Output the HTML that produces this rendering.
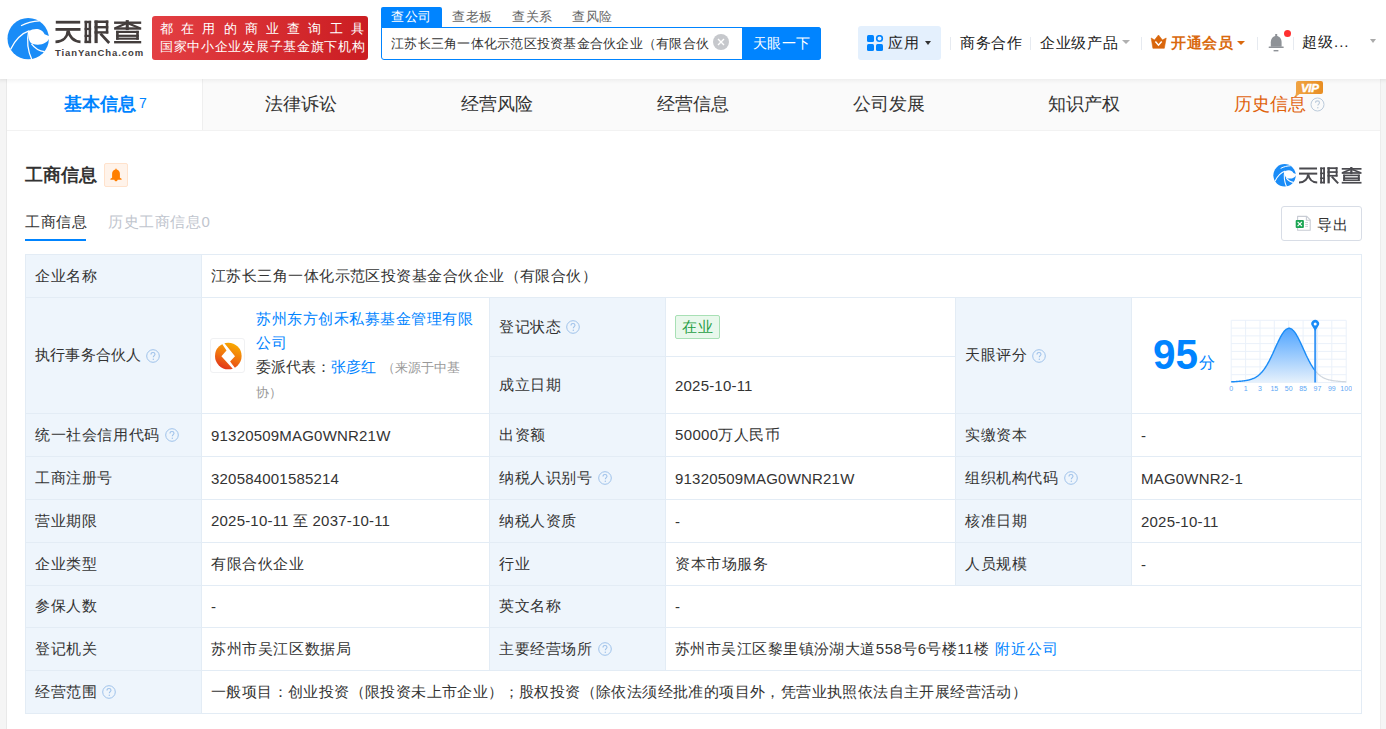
<!DOCTYPE html>
<html><head><meta charset="utf-8">
<style>
*{box-sizing:border-box;margin:0;padding:0}
html,body{width:1386px;height:729px;overflow:hidden;background:#f5f5f5;font-family:"Liberation Sans",sans-serif;color:#333}
.abs{position:absolute;white-space:nowrap}
#hdr{position:absolute;left:0;top:0;width:1386px;height:79px;background:#fff;box-shadow:0 1px 3px rgba(0,0,0,.04)}
#card{position:absolute;left:6px;top:79px;width:1375px;height:660px;background:#fff;border-left:1px solid #e9e9e9;border-right:1px solid #ececec}
#shd{position:absolute;left:0;top:79px;width:1386px;height:5px;background:linear-gradient(rgba(0,0,0,.045),rgba(0,0,0,0))}
#tabs{position:absolute;left:0;top:0;width:1373px;height:52px;background:#fafafa;border-bottom:1px solid #f2f2f2}
.tab{position:absolute;top:0;height:52px;line-height:50px;font-size:18px;color:#333;text-align:center}
.tb{position:absolute;left:18px;top:175px;width:1337px;border-collapse:collapse}
.c{position:absolute;display:flex;align-items:center;white-space:nowrap;font-size:15px;color:#333;letter-spacing:0.6px}
.n{letter-spacing:0.2px}
.q{margin-left:5px;flex:none}
.tag{display:inline-block;height:24px;line-height:22px;padding:0 6px;border:1px solid #a8e0b5;background:#e9f8ec;color:#1f9e44;border-radius:2px;font-size:15px}
.lnk{color:#0084ff}
</style></head><body>
<div id="hdr">
  <!-- logo -->
  <svg class="abs" style="left:5px;top:14px" width="48" height="48" viewBox="0 0 48 48">
<circle cx="23.2" cy="24.6" r="20.7" fill="#1a8cf7"/>
<path d="M23.8 17.2C29 14.2 36.5 13.8 39.6 20.3L45 22.5C43.5 29.5 35 32 28 30C24.5 28.8 22.8 25 23.8 17.2Z" fill="#fff"/>
<path d="M5.5 35.5C10 26 16 19.5 24.5 16.6" stroke="#fff" stroke-width="1.3" fill="none"/>
<path d="M23.6 17.5C21.8 26 22.5 36 26.8 45.5" stroke="#fff" stroke-width="1.3" fill="none"/>
<path d="M16 11.8C22 8.5 28 7.2 34.5 6.9" stroke="#fff" stroke-width="1.2" fill="none"/>
<path d="M26.5 29.8C30 34.5 34 37 39.5 37.6" stroke="#fff" stroke-width="1.3" fill="none"/>
  </svg>
  <svg class="abs" style="left:50px;top:15px;color:#433d3c" width="95" height="32" viewBox="0 0 95 32"><g fill="currentColor">
<rect x="5.8" y="5.8" width="24.4" height="2.8"/><rect x="5.5" y="13" width="25" height="2.8"/>
<rect x="34.6" y="5.8" width="6.5" height="2.4"/><rect x="34.6" y="25.7" width="6.5" height="2.4"/><rect x="34.6" y="5.8" width="2.5" height="22.3"/><rect x="38.6" y="5.8" width="2.5" height="22.3"/><rect x="34.6" y="12.9" width="6.5" height="2.2"/><rect x="34.6" y="19.8" width="6.5" height="2.2"/>
<rect x="44.5" y="5.5" width="3.2" height="22.6"/><rect x="44.5" y="5.5" width="13.8" height="2.5"/><rect x="55.8" y="5.5" width="2.5" height="13"/><rect x="44.5" y="11" width="13.8" height="2.4"/><rect x="44.5" y="16.2" width="13.8" height="2.4"/>
<rect x="64.1" y="6.5" width="27.1" height="2.4"/><rect x="75.7" y="5.1" width="3.1" height="10"/><rect x="64.1" y="12.3" width="27.1" height="2.4"/><rect x="66.1" y="15.8" width="2.6" height="8.9"/><rect x="86.2" y="15.8" width="2.6" height="8.9"/><rect x="66.1" y="15.8" width="22.7" height="2.2"/><rect x="66.1" y="19.7" width="22.7" height="2.2"/><rect x="66.1" y="22.6" width="22.7" height="2.1"/><rect x="64.1" y="26" width="27.1" height="2.4"/>
</g>
<g stroke="currentColor" fill="none" stroke-width="2.8"><path d="M18 15.5C17.6 21.5 13.5 26.6 5.5 26.9"/><path d="M18.2 15.5C19 21.5 23.5 26.6 30.5 26.9"/><path d="M50.5 18.6L59.2 28"/></g>
<g stroke="currentColor" fill="none" stroke-width="2.2"><path d="M76 8.5L65 13.2M78.5 8.5L90 13.2"/></g></svg>
  <div class="abs" style="left:55px;top:47px;font-size:9.5px;font-weight:bold;color:#433d3c;letter-spacing:0.9px">TianYanCha.com</div>
  <div class="abs" style="left:152px;top:16px;width:216px;height:44px;border-radius:3px;background:linear-gradient(90deg,#e33f43,#cb1d22)"></div>
  <div class="abs" style="left:160px;top:20px;font-size:13px;color:#fff;letter-spacing:8.2px">都在用的商业查询工具</div>
  <div class="abs" style="left:160px;top:38px;font-size:13px;color:#fff;letter-spacing:0.7px">国家中小企业发展子基金旗下机构</div>
  <!-- search -->
  <div class="abs" style="left:381px;top:7px;width:61px;height:21px;background:#0084ff;border-radius:2px 2px 0 0"></div>
  <div class="abs" style="left:391px;top:8px;font-size:13px;letter-spacing:0.6px;color:#fff">查公司</div>
  <div class="abs" style="left:452px;top:8px;font-size:13px;letter-spacing:0.6px;color:#666">查老板</div>
  <div class="abs" style="left:512px;top:8px;font-size:13px;letter-spacing:0.6px;color:#666">查关系</div>
  <div class="abs" style="left:572px;top:8px;font-size:13px;letter-spacing:0.6px;color:#666">查风险</div>
  <div class="abs" style="left:381px;top:27px;width:440px;height:33px;border:1px solid #0084ff;border-radius:0 3px 3px 3px;background:#fff"></div>
  <div class="abs" style="left:391px;top:35px;font-size:13px;letter-spacing:0.25px;color:#333">江苏长三角一体化示范区投资基金合伙企业（有限合伙</div>
  <svg class="abs" style="left:713px;top:34px" width="16" height="16" viewBox="0 0 16 16"><circle cx="8" cy="8" r="8" fill="#c6c8cc"/><path d="M5 5L11 11M11 5L5 11" stroke="#fff" stroke-width="1.4"/></svg>
  <div class="abs" style="left:742px;top:27px;width:79px;height:33px;background:#0084ff;border-radius:0 3px 3px 0;color:#fff;font-size:14px;letter-spacing:0.6px;text-indent:0.6px;line-height:33px;text-align:center">天眼一下</div>
  <!-- right nav -->
  <div class="abs" style="left:858px;top:26px;width:83px;height:34px;background:#e4f0fd;border-radius:3px"></div>
  <svg class="abs" style="left:867px;top:35px" width="17" height="16" viewBox="0 0 17 16">
    <rect x="0" y="0" width="7" height="7" rx="1.5" fill="#0084ff"/>
    <circle cx="12.5" cy="3.5" r="2.8" fill="none" stroke="#0084ff" stroke-width="1.6"/>
    <rect x="0" y="9" width="7" height="7" rx="1.5" fill="#0084ff"/>
    <rect x="9" y="9" width="7" height="7" rx="1.5" fill="#0084ff"/>
  </svg>
  <div class="abs" style="left:888px;top:34px;font-size:15px;letter-spacing:1px;color:#222">应用</div>
  <div class="abs" style="left:925px;top:41px;width:0;height:0;border-left:3.5px solid transparent;border-right:3.5px solid transparent;border-top:4px solid #333"></div>
  <div class="abs" style="left:950px;top:37px;width:1px;height:13px;background:#e6eaf0"></div>
  <div class="abs" style="left:960px;top:34px;font-size:15px;letter-spacing:0.7px;color:#222">商务合作</div>
  <div class="abs" style="left:1030px;top:37px;width:1px;height:13px;background:#e6eaf0"></div>
  <div class="abs" style="left:1040px;top:34px;font-size:15px;letter-spacing:0.7px;color:#222">企业级产品</div>
  <div class="abs" style="left:1122px;top:40px;width:0;height:0;border-left:4px solid transparent;border-right:4px solid transparent;border-top:4px solid #b0b0b0"></div>
  <div class="abs" style="left:1141px;top:37px;width:1px;height:13px;background:#e6eaf0"></div>
  <svg class="abs" style="left:1150px;top:34px" width="18" height="16" viewBox="0 0 18 16"><path d="M1.2 4L4.5 6L8.5 1L12.4 6L16.2 4L14.3 14.3H2.9Z" fill="#d9660c" stroke="#d9660c" stroke-width="0.6" stroke-linejoin="round"/><path d="M5.4 7.6L8.5 11.2L11.7 7.6" stroke="#fff" stroke-width="1.5" fill="none"/></svg>
  <div class="abs" style="left:1171px;top:34px;font-size:15px;letter-spacing:0.5px;font-weight:bold;color:#d9690e">开通会员</div>
  <div class="abs" style="left:1237px;top:41px;width:0;height:0;border-left:4px solid transparent;border-right:4px solid transparent;border-top:4px solid #d9690e"></div>
  <div class="abs" style="left:1257px;top:37px;width:1px;height:13px;background:#e6eaf0"></div>
  <svg class="abs" style="left:1268px;top:34px" width="17" height="18" viewBox="0 0 17 18"><rect x="7.2" y="0" width="2" height="2.6" fill="#8e9297"/><path d="M2.8 12.8V8.2C2.8 4.6 5 2 8.2 2S13.6 4.6 13.6 8.2V12.8Z" fill="#8e9297"/><rect x="0.6" y="12.4" width="15.2" height="1.5" rx="0.7" fill="#8e9297"/><rect x="5.6" y="16" width="4.8" height="1.4" fill="#8e9297"/></svg>
  <div class="abs" style="left:1284px;top:30px;width:7px;height:7px;border-radius:50%;background:#ff3030"></div>
  <div class="abs" style="left:1293px;top:37px;width:1px;height:13px;background:#e6eaf0"></div>
  <div class="abs" style="left:1302px;top:33px;font-size:15px;letter-spacing:1px;color:#222">超级...</div>
  <div class="abs" style="left:1370px;top:39px;width:0;height:0;border-left:3.5px solid transparent;border-right:3.5px solid transparent;border-top:4px solid #aaa"></div>
</div>

<div id="card">
  <div id="tabs">
    <div class="abs" style="left:0;top:0;width:196px;height:51px;background:#fff;border-right:1px solid #efefef"></div>
    <div class="tab" style="left:57px;top:-1px;font-weight:bold;color:#0084ff">基本信息<span style="font-size:14px;font-weight:normal;margin-left:3px;vertical-align:2px">7</span></div>
    <div class="tab" style="left:258px">法律诉讼</div>
    <div class="tab" style="left:454px">经营风险</div>
    <div class="tab" style="left:650px">经营信息</div>
    <div class="tab" style="left:846px">公司发展</div>
    <div class="tab" style="left:1041px">知识产权</div>
    <div class="tab" style="left:1227px;color:#e0620c">历史信息</div>
  </div>
</div>

<div id="shd"></div>
<!-- section -->
<div class="abs" style="left:25px;top:163px;font-size:18px;font-weight:bold;color:#333">工商信息</div>
<div class="abs" style="left:104px;top:163px;width:24px;height:24px;background:#fff3ea;border:1px solid #ffe2cc;border-radius:2px"></div>
<svg class="abs" style="left:110px;top:168px" width="12" height="14" viewBox="0 0 12 14"><path d="M6 0.6C5.5 0.6 5.4 1 5.4 1.5C3.4 2 2.1 3.6 2.1 5.8V9.8L0.4 10.8V11.8H4.3C4.4 12.7 5.1 13.3 6 13.3S7.6 12.7 7.7 11.8H11.6V10.8L9.9 9.8V5.8C9.9 3.6 8.6 2 6.6 1.5C6.6 1 6.5 0.6 6 0.6Z" fill="#ff7f00"/></svg>
<svg class="abs" style="left:1272px;top:162px" width="26" height="26" viewBox="0 0 48 48">
<circle cx="23.2" cy="24.6" r="20.7" fill="#1a8cf7"/>
<path d="M23.8 17.2C29 14.2 36.5 13.8 39.6 20.3L45 22.5C43.5 29.5 35 32 28 30C24.5 28.8 22.8 25 23.8 17.2Z" fill="#fff"/>
<path d="M5.5 35.5C10 26 16 19.5 24.5 16.6" stroke="#fff" stroke-width="2" fill="none"/>
<path d="M23.6 17.5C21.8 26 22.5 36 26.8 45.5" stroke="#fff" stroke-width="2" fill="none"/>
<path d="M16 11.8C22 8.5 28 7.2 34.5 6.9" stroke="#fff" stroke-width="1.8" fill="none"/>
<path d="M26.5 29.8C30 34.5 34 37 39.5 37.6" stroke="#fff" stroke-width="2" fill="none"/>
</svg>
<svg class="abs" style="left:1299px;top:167px;color:#4a4a4f" width="62.5" height="16.6" viewBox="5.5 5.1 85.7 23.3" preserveAspectRatio="none"><g fill="currentColor">
<rect x="5.8" y="5.8" width="24.4" height="2.8"/><rect x="5.5" y="13" width="25" height="2.8"/>
<rect x="34.6" y="5.8" width="6.5" height="2.4"/><rect x="34.6" y="25.7" width="6.5" height="2.4"/><rect x="34.6" y="5.8" width="2.5" height="22.3"/><rect x="38.6" y="5.8" width="2.5" height="22.3"/><rect x="34.6" y="12.9" width="6.5" height="2.2"/><rect x="34.6" y="19.8" width="6.5" height="2.2"/>
<rect x="44.5" y="5.5" width="3.2" height="22.6"/><rect x="44.5" y="5.5" width="13.8" height="2.5"/><rect x="55.8" y="5.5" width="2.5" height="13"/><rect x="44.5" y="11" width="13.8" height="2.4"/><rect x="44.5" y="16.2" width="13.8" height="2.4"/>
<rect x="64.1" y="6.5" width="27.1" height="2.4"/><rect x="75.7" y="5.1" width="3.1" height="10"/><rect x="64.1" y="12.3" width="27.1" height="2.4"/><rect x="66.1" y="15.8" width="2.6" height="8.9"/><rect x="86.2" y="15.8" width="2.6" height="8.9"/><rect x="66.1" y="15.8" width="22.7" height="2.2"/><rect x="66.1" y="19.7" width="22.7" height="2.2"/><rect x="66.1" y="22.6" width="22.7" height="2.1"/><rect x="64.1" y="26" width="27.1" height="2.4"/>
</g>
<g stroke="currentColor" fill="none" stroke-width="2.8"><path d="M18 15.5C17.6 21.5 13.5 26.6 5.5 26.9"/><path d="M18.2 15.5C19 21.5 23.5 26.6 30.5 26.9"/><path d="M50.5 18.6L59.2 28"/></g>
<g stroke="currentColor" fill="none" stroke-width="2.2"><path d="M76 8.5L65 13.2M78.5 8.5L90 13.2"/></g></svg>
<div class="abs" style="left:25px;top:213px;font-size:15px;letter-spacing:0.5px;color:#333">工商信息</div>
<div class="abs" style="left:108px;top:213px;font-size:15px;letter-spacing:0.6px;color:#bfc5ce">历史工商信息0</div>
<div class="abs" style="left:25px;top:239px;width:61px;height:2px;background:#0084ff"></div>
<div class="abs" style="left:1281px;top:206px;width:81px;height:35px;border:1px solid #d8dde6;border-radius:3px;background:#fff"></div>
<svg class="abs" style="left:1295px;top:215px" width="17" height="17" viewBox="0 0 17 17"><path d="M2.6 1.4H11.8L15.2 4.8V15.2H2.6Z" fill="#fff" stroke="#c8ccd4" stroke-width="1.1" stroke-linejoin="round"/><path d="M11.4 1.4V5.2H15.2" fill="none" stroke="#c8ccd4" stroke-width="1.1"/><rect x="0.7" y="5" width="8.2" height="8" rx="1" fill="#1ba553"/><path d="M2.6 6.9L6.9 11.1M6.9 6.9L2.6 11.1" stroke="#fff" stroke-width="1.2"/><path d="M10.2 7.5H13M10.2 9.5H13M10.2 11.4H13" stroke="#c8ccd4" stroke-width="0.9"/></svg>
<div class="abs" style="left:1317px;top:216px;font-size:15px;letter-spacing:0.5px;color:#333">导出</div>
<div class="abs" style="left:25px;top:254px;width:1337px;height:460px;background:#fff"></div>
<div class="abs" style="left:25px;top:254px;width:176px;height:459px;background:#eef5fc"></div>
<div class="abs" style="left:489px;top:297px;width:176px;height:288px;background:#eef5fc"></div>
<div class="abs" style="left:955px;top:297px;width:176px;height:288px;background:#eef5fc"></div>
<div class="abs" style="left:489px;top:585px;width:176px;height:85px;background:#eef5fc"></div>
<div class="abs" style="left:25px;top:254px;width:1337px;height:1px;background:#e3ecf5"></div>
<div class="abs" style="left:25px;top:297px;width:1337px;height:1px;background:#e3ecf5"></div>
<div class="abs" style="left:25px;top:413px;width:1337px;height:1px;background:#e3ecf5"></div>
<div class="abs" style="left:25px;top:456px;width:1337px;height:1px;background:#e3ecf5"></div>
<div class="abs" style="left:25px;top:499px;width:1337px;height:1px;background:#e3ecf5"></div>
<div class="abs" style="left:25px;top:542px;width:1337px;height:1px;background:#e3ecf5"></div>
<div class="abs" style="left:25px;top:585px;width:1337px;height:1px;background:#e3ecf5"></div>
<div class="abs" style="left:25px;top:627px;width:1337px;height:1px;background:#e3ecf5"></div>
<div class="abs" style="left:25px;top:670px;width:1337px;height:1px;background:#e3ecf5"></div>
<div class="abs" style="left:25px;top:713px;width:1337px;height:1px;background:#e3ecf5"></div>
<div class="abs" style="left:489px;top:356px;width:467px;height:1px;background:#e3ecf5"></div>
<div class="abs" style="left:25px;top:254px;width:1px;height:460px;background:#e3ecf5"></div>
<div class="abs" style="left:1361px;top:254px;width:1px;height:460px;background:#e3ecf5"></div>
<div class="abs" style="left:201px;top:254px;width:1px;height:460px;background:#e3ecf5"></div>
<div class="abs" style="left:489px;top:297px;width:1px;height:374px;background:#e3ecf5"></div>
<div class="abs" style="left:665px;top:297px;width:1px;height:374px;background:#e3ecf5"></div>
<div class="abs" style="left:955px;top:297px;width:1px;height:289px;background:#e3ecf5"></div>
<div class="abs" style="left:1131px;top:297px;width:1px;height:289px;background:#e3ecf5"></div>
<div class="c" style="left:35px;top:255px;height:42px">企业名称</div>
<div class="c" style="left:211px;top:255px;height:42px;letter-spacing:0.45px">江苏长三角一体化示范区投资基金合伙企业（有限合伙）</div>
<div class="c" style="left:35px;top:298px;height:115px;letter-spacing:0.2px">执行事务合伙人<svg class="q" width="14" height="14" viewBox="0 0 14 14"><circle cx="7" cy="7" r="6.3" fill="none" stroke="#9fc2ea" stroke-width="1"/><path d="M5 5.4C5 4.2 5.9 3.5 7 3.5S9 4.2 9 5.3C9 6.5 7.3 6.8 7.3 8.2" fill="none" stroke="#9fc2ea" stroke-width="1.1"/><circle cx="7.3" cy="10.2" r="0.7" fill="#9fc2ea"/></svg></div>
<div class="c" style="left:499px;top:298px;height:58px">登记状态<svg class="q" width="14" height="14" viewBox="0 0 14 14"><circle cx="7" cy="7" r="6.3" fill="none" stroke="#9fc2ea" stroke-width="1"/><path d="M5 5.4C5 4.2 5.9 3.5 7 3.5S9 4.2 9 5.3C9 6.5 7.3 6.8 7.3 8.2" fill="none" stroke="#9fc2ea" stroke-width="1.1"/><circle cx="7.3" cy="10.2" r="0.7" fill="#9fc2ea"/></svg></div>
<div class="c" style="left:675px;top:298px;height:58px"><span class="tag">在业</span></div>
<div class="c" style="left:499px;top:357px;height:56px">成立日期</div>
<div class="c n" style="left:675px;top:357px;height:56px">2025-10-11</div>
<div class="c" style="left:965px;top:298px;height:115px">天眼评分<svg class="q" width="14" height="14" viewBox="0 0 14 14"><circle cx="7" cy="7" r="6.3" fill="none" stroke="#9fc2ea" stroke-width="1"/><path d="M5 5.4C5 4.2 5.9 3.5 7 3.5S9 4.2 9 5.3C9 6.5 7.3 6.8 7.3 8.2" fill="none" stroke="#9fc2ea" stroke-width="1.1"/><circle cx="7.3" cy="10.2" r="0.7" fill="#9fc2ea"/></svg></div>
<div class="c" style="left:35px;top:414px;height:42px">统一社会信用代码<svg class="q" width="14" height="14" viewBox="0 0 14 14"><circle cx="7" cy="7" r="6.3" fill="none" stroke="#9fc2ea" stroke-width="1"/><path d="M5 5.4C5 4.2 5.9 3.5 7 3.5S9 4.2 9 5.3C9 6.5 7.3 6.8 7.3 8.2" fill="none" stroke="#9fc2ea" stroke-width="1.1"/><circle cx="7.3" cy="10.2" r="0.7" fill="#9fc2ea"/></svg></div>
<div class="c n" style="left:211px;top:414px;height:42px">91320509MAG0WNR21W</div>
<div class="c" style="left:499px;top:414px;height:42px">出资额</div>
<div class="c" style="left:675px;top:414px;height:42px;letter-spacing:0.35px">50000万人民币</div>
<div class="c" style="left:965px;top:414px;height:42px">实缴资本</div>
<div class="c n" style="left:1141px;top:414px;height:42px">-</div>
<div class="c" style="left:35px;top:457px;height:42px">工商注册号</div>
<div class="c n" style="left:211px;top:457px;height:42px">320584001585214</div>
<div class="c" style="left:499px;top:457px;height:42px">纳税人识别号<svg class="q" width="14" height="14" viewBox="0 0 14 14"><circle cx="7" cy="7" r="6.3" fill="none" stroke="#9fc2ea" stroke-width="1"/><path d="M5 5.4C5 4.2 5.9 3.5 7 3.5S9 4.2 9 5.3C9 6.5 7.3 6.8 7.3 8.2" fill="none" stroke="#9fc2ea" stroke-width="1.1"/><circle cx="7.3" cy="10.2" r="0.7" fill="#9fc2ea"/></svg></div>
<div class="c n" style="left:675px;top:457px;height:42px">91320509MAG0WNR21W</div>
<div class="c" style="left:965px;top:457px;height:42px">组织机构代码<svg class="q" width="14" height="14" viewBox="0 0 14 14"><circle cx="7" cy="7" r="6.3" fill="none" stroke="#9fc2ea" stroke-width="1"/><path d="M5 5.4C5 4.2 5.9 3.5 7 3.5S9 4.2 9 5.3C9 6.5 7.3 6.8 7.3 8.2" fill="none" stroke="#9fc2ea" stroke-width="1.1"/><circle cx="7.3" cy="10.2" r="0.7" fill="#9fc2ea"/></svg></div>
<div class="c n" style="left:1141px;top:457px;height:42px">MAG0WNR2-1</div>
<div class="c" style="left:35px;top:500px;height:42px">营业期限</div>
<div class="c n" style="left:211px;top:500px;height:42px">2025-10-11 至 2037-10-11</div>
<div class="c" style="left:499px;top:500px;height:42px">纳税人资质</div>
<div class="c n" style="left:675px;top:500px;height:42px">-</div>
<div class="c" style="left:965px;top:500px;height:42px">核准日期</div>
<div class="c n" style="left:1141px;top:500px;height:42px">2025-10-11</div>
<div class="c" style="left:35px;top:543px;height:42px">企业类型</div>
<div class="c" style="left:211px;top:543px;height:42px">有限合伙企业</div>
<div class="c" style="left:499px;top:543px;height:42px">行业</div>
<div class="c" style="left:675px;top:543px;height:42px">资本市场服务</div>
<div class="c" style="left:965px;top:543px;height:42px">人员规模</div>
<div class="c n" style="left:1141px;top:543px;height:42px">-</div>
<div class="c" style="left:35px;top:586px;height:41px">参保人数</div>
<div class="c n" style="left:211px;top:586px;height:41px">-</div>
<div class="c" style="left:499px;top:586px;height:41px">英文名称</div>
<div class="c n" style="left:675px;top:586px;height:41px">-</div>
<div class="c" style="left:35px;top:628px;height:42px">登记机关</div>
<div class="c" style="left:211px;top:628px;height:42px">苏州市吴江区数据局</div>
<div class="c" style="left:499px;top:628px;height:42px">主要经营场所<svg class="q" width="14" height="14" viewBox="0 0 14 14"><circle cx="7" cy="7" r="6.3" fill="none" stroke="#9fc2ea" stroke-width="1"/><path d="M5 5.4C5 4.2 5.9 3.5 7 3.5S9 4.2 9 5.3C9 6.5 7.3 6.8 7.3 8.2" fill="none" stroke="#9fc2ea" stroke-width="1.1"/><circle cx="7.3" cy="10.2" r="0.7" fill="#9fc2ea"/></svg></div>
<div class="c" style="left:675px;top:628px;height:42px;letter-spacing:0.45px">苏州市吴江区黎里镇汾湖大道558号6号楼11楼<span class="lnk" style="margin-left:6px;letter-spacing:0.9px">附近公司</span></div>
<div class="c" style="left:35px;top:671px;height:42px">经营范围<svg class="q" width="14" height="14" viewBox="0 0 14 14"><circle cx="7" cy="7" r="6.3" fill="none" stroke="#9fc2ea" stroke-width="1"/><path d="M5 5.4C5 4.2 5.9 3.5 7 3.5S9 4.2 9 5.3C9 6.5 7.3 6.8 7.3 8.2" fill="none" stroke="#9fc2ea" stroke-width="1.1"/><circle cx="7.3" cy="10.2" r="0.7" fill="#9fc2ea"/></svg></div>
<div class="c" style="left:211px;top:671px;height:42px;letter-spacing:0.4px">一般项目：创业投资（限投资未上市企业）；股权投资（除依法须经批准的项目外，凭营业执照依法自主开展经营活动）</div>

<!-- partner -->
<div class="abs" style="left:210px;top:338px;width:35px;height:35px;border:1px solid #f0f1f3;border-radius:3px;background:#fff"></div>
<svg class="abs" style="left:206px;top:334px" width="44" height="44" viewBox="0 0 44 44">
<defs><linearGradient id="pl" x1="0.7" y1="0" x2="0.3" y2="1"><stop offset="0" stop-color="#f8ad00"/><stop offset="0.55" stop-color="#f07010"/><stop offset="1" stop-color="#e0321c"/></linearGradient></defs>
<circle cx="22.3" cy="22" r="13.3" fill="url(#pl)"/>
<path d="M15.2 8.4L17.2 7.8L29 22.3L24.1 27.5L29.4 34.6L27.4 35.5L15.4 22.3L20.5 16.6Z" fill="#fff"/>
</svg>
<div class="abs" style="left:256px;top:308px;font-size:15px;letter-spacing:0.5px;line-height:21px;color:#0084ff">苏州东方创禾私募基金管理有限</div>
<div class="abs" style="left:256px;top:332px;font-size:15px;letter-spacing:0.5px;line-height:21px;color:#0084ff">公司</div>
<div class="abs" style="left:256px;top:356px;font-size:15px;line-height:21px;color:#333">委派代表：<span style="color:#0084ff">张彦红</span><span style="color:#999;font-size:13px;margin-left:6px">（来源于中基</span></div>
<div class="abs" style="left:256px;top:382px;font-size:13px;line-height:21px;color:#999">协）</div>
<!-- score -->
<div class="abs" style="left:1153px;top:329px;font-size:43px;line-height:50px;font-weight:bold;color:#0084ff;transform:scaleX(0.94);transform-origin:0 0">95</div>
<div class="abs" style="left:1199px;top:353px;font-size:16px;line-height:20px;color:#0084ff">分</div>
<svg class="abs" style="left:1226px;top:316px" width="126" height="80" viewBox="0 0 126 80">
<defs><linearGradient id="gf" x1="0" y1="0" x2="0" y2="1"><stop offset="0" stop-color="#4fa4ff"/><stop offset="1" stop-color="#e6f1fc"/></linearGradient></defs>
<g stroke="#eaf1fa" stroke-width="1"><line x1="5.2" y1="4.3" x2="5.2" y2="66.5"/><line x1="19.6" y1="4.3" x2="19.6" y2="66.5"/><line x1="34.0" y1="4.3" x2="34.0" y2="66.5"/><line x1="48.3" y1="4.3" x2="48.3" y2="66.5"/><line x1="62.7" y1="4.3" x2="62.7" y2="66.5"/><line x1="77.1" y1="4.3" x2="77.1" y2="66.5"/><line x1="91.5" y1="4.3" x2="91.5" y2="66.5"/><line x1="105.8" y1="4.3" x2="105.8" y2="66.5"/><line x1="120.2" y1="4.3" x2="120.2" y2="66.5"/><line x1="5.2" y1="4.3" x2="120.2" y2="4.3"/><line x1="5.2" y1="12.1" x2="120.2" y2="12.1"/><line x1="5.2" y1="19.9" x2="120.2" y2="19.9"/><line x1="5.2" y1="27.6" x2="120.2" y2="27.6"/><line x1="5.2" y1="35.4" x2="120.2" y2="35.4"/><line x1="5.2" y1="43.2" x2="120.2" y2="43.2"/><line x1="5.2" y1="50.9" x2="120.2" y2="50.9"/><line x1="5.2" y1="58.7" x2="120.2" y2="58.7"/><line x1="5.2" y1="66.5" x2="120.2" y2="66.5"/></g>
<path d="M5.2,66.5 L5.2,65.8 5.7,65.8 6.2,65.8 6.7,65.7 7.2,65.7 7.7,65.7 8.2,65.7 8.7,65.6 9.2,65.6 9.7,65.6 10.2,65.5 10.7,65.5 11.2,65.5 11.7,65.4 12.2,65.4 12.7,65.4 13.2,65.3 13.7,65.3 14.2,65.2 14.7,65.2 15.2,65.1 15.7,65.1 16.2,65.0 16.7,65.0 17.2,64.9 17.7,64.9 18.2,64.8 18.7,64.7 19.2,64.6 19.7,64.6 20.2,64.5 20.7,64.4 21.2,64.3 21.7,64.2 22.2,64.1 22.7,64.0 23.2,63.9 23.7,63.7 24.2,63.6 24.7,63.4 25.2,63.3 25.7,63.1 26.2,62.9 26.7,62.7 27.2,62.5 27.7,62.3 28.2,62.1 28.7,61.8 29.2,61.6 29.7,61.3 30.2,61.0 30.7,60.7 31.2,60.3 31.7,60.0 32.2,59.6 32.7,59.2 33.2,58.8 33.7,58.3 34.2,57.9 34.7,57.4 35.2,56.8 35.7,56.3 36.2,55.7 36.7,55.1 37.2,54.5 37.7,53.9 38.2,53.2 38.7,52.5 39.2,51.7 39.7,51.0 40.2,50.2 40.7,49.4 41.2,48.5 41.7,47.6 42.2,46.7 42.7,45.8 43.2,44.9 43.7,43.9 44.2,42.9 44.7,41.9 45.2,40.9 45.7,39.8 46.2,38.7 46.7,37.7 47.2,36.6 47.7,35.5 48.2,34.4 48.7,33.3 49.2,32.1 49.7,31.0 50.2,29.9 50.7,28.8 51.2,27.7 51.7,26.7 52.2,25.6 52.7,24.6 53.2,23.6 53.7,22.6 54.2,21.6 54.7,20.7 55.2,19.8 55.7,18.9 56.2,18.1 56.7,17.3 57.2,16.6 57.7,15.9 58.2,15.3 58.7,14.7 59.2,14.2 59.7,13.8 60.2,13.4 60.7,13.0 61.2,12.8 61.7,12.6 62.2,12.4 62.7,12.3 63.2,12.3 63.7,12.3 64.2,12.5 64.7,12.6 65.2,12.9 65.7,13.2 66.2,13.5 66.7,14.0 67.2,14.4 67.7,15.0 68.2,15.6 68.7,16.2 69.2,16.9 69.7,17.6 70.2,18.4 70.7,19.3 71.2,20.1 71.7,21.0 72.2,22.0 72.7,23.0 73.2,24.0 73.7,25.0 74.2,26.0 74.7,27.1 75.2,28.2 75.7,29.3 76.2,30.4 76.7,31.5 77.2,32.6 77.7,33.7 78.2,34.8 78.7,35.9 79.2,37.0 79.7,38.1 80.2,39.2 80.7,40.2 81.2,41.3 81.7,42.3 82.2,43.3 82.7,44.3 83.2,45.2 83.7,46.2 84.2,47.1 84.7,48.0 85.2,48.9 85.7,49.7 86.2,50.5 86.7,51.3 87.2,52.0 87.7,52.8 88.2,53.4 88.7,54.1 89.2,54.8 L89.2,66.5 Z" fill="url(#gf)"/>
<polyline points="5.2,65.8 5.7,65.8 6.2,65.8 6.7,65.7 7.2,65.7 7.7,65.7 8.2,65.7 8.7,65.6 9.2,65.6 9.7,65.6 10.2,65.5 10.7,65.5 11.2,65.5 11.7,65.4 12.2,65.4 12.7,65.4 13.2,65.3 13.7,65.3 14.2,65.2 14.7,65.2 15.2,65.1 15.7,65.1 16.2,65.0 16.7,65.0 17.2,64.9 17.7,64.9 18.2,64.8 18.7,64.7 19.2,64.6 19.7,64.6 20.2,64.5 20.7,64.4 21.2,64.3 21.7,64.2 22.2,64.1 22.7,64.0 23.2,63.9 23.7,63.7 24.2,63.6 24.7,63.4 25.2,63.3 25.7,63.1 26.2,62.9 26.7,62.7 27.2,62.5 27.7,62.3 28.2,62.1 28.7,61.8 29.2,61.6 29.7,61.3 30.2,61.0 30.7,60.7 31.2,60.3 31.7,60.0 32.2,59.6 32.7,59.2 33.2,58.8 33.7,58.3 34.2,57.9 34.7,57.4 35.2,56.8 35.7,56.3 36.2,55.7 36.7,55.1 37.2,54.5 37.7,53.9 38.2,53.2 38.7,52.5 39.2,51.7 39.7,51.0 40.2,50.2 40.7,49.4 41.2,48.5 41.7,47.6 42.2,46.7 42.7,45.8 43.2,44.9 43.7,43.9 44.2,42.9 44.7,41.9 45.2,40.9 45.7,39.8 46.2,38.7 46.7,37.7 47.2,36.6 47.7,35.5 48.2,34.4 48.7,33.3 49.2,32.1 49.7,31.0 50.2,29.9 50.7,28.8 51.2,27.7 51.7,26.7 52.2,25.6 52.7,24.6 53.2,23.6 53.7,22.6 54.2,21.6 54.7,20.7 55.2,19.8 55.7,18.9 56.2,18.1 56.7,17.3 57.2,16.6 57.7,15.9 58.2,15.3 58.7,14.7 59.2,14.2 59.7,13.8 60.2,13.4 60.7,13.0 61.2,12.8 61.7,12.6 62.2,12.4 62.7,12.3 63.2,12.3 63.7,12.3 64.2,12.5 64.7,12.6 65.2,12.9 65.7,13.2 66.2,13.5 66.7,14.0 67.2,14.4 67.7,15.0 68.2,15.6 68.7,16.2 69.2,16.9 69.7,17.6 70.2,18.4 70.7,19.3 71.2,20.1 71.7,21.0 72.2,22.0 72.7,23.0 73.2,24.0 73.7,25.0 74.2,26.0 74.7,27.1 75.2,28.2 75.7,29.3 76.2,30.4 76.7,31.5 77.2,32.6 77.7,33.7 78.2,34.8 78.7,35.9 79.2,37.0 79.7,38.1 80.2,39.2 80.7,40.2 81.2,41.3 81.7,42.3 82.2,43.3 82.7,44.3 83.2,45.2 83.7,46.2 84.2,47.1 84.7,48.0 85.2,48.9 85.7,49.7 86.2,50.5 86.7,51.3 87.2,52.0 87.7,52.8 88.2,53.4 88.7,54.1 89.2,54.8" fill="none" stroke="#1a8cf7" stroke-width="1.4"/>
<polyline points="89.2,54.8 89.7,55.4 90.2,56.0 90.7,56.5 91.2,57.1 91.7,57.6 92.2,58.0 92.7,58.5 93.2,58.9 93.7,59.3 94.2,59.7 94.7,60.1 95.2,60.5 95.7,60.8 96.2,61.1 96.7,61.4 97.2,61.7 97.7,61.9 98.2,62.2 98.7,62.4 99.2,62.6 99.7,62.8 100.2,63.0 100.7,63.2 101.2,63.3 101.7,63.5 102.2,63.6 102.7,63.8 103.2,63.9 103.7,64.0 104.2,64.1 104.7,64.2 105.2,64.3 105.7,64.4 106.2,64.5 106.7,64.6 107.2,64.7 107.7,64.8 108.2,64.8 108.7,64.9 109.2,64.9 109.7,65.0 110.2,65.1 110.7,65.1 111.2,65.2 111.7,65.2 112.2,65.3 112.7,65.3 113.2,65.3 113.7,65.4 114.2,65.4 114.7,65.5 115.2,65.5 115.7,65.5 116.2,65.6 116.7,65.6 117.2,65.6 117.7,65.6 118.2,65.7 118.7,65.7 119.2,65.7 119.7,65.8 120.2,65.8" fill="none" stroke="#cfd6de" stroke-width="1.2"/>
<rect x="88.2" y="11" width="2" height="55.5" fill="#3a97f7"/>
<path d="M89.2 15 L85.9 9.800000000000011 A3.9 3.9 0 1 1 92.5 9.800000000000011 Z" fill="#1a8cf7"/>
<circle cx="89.2" cy="7.899999999999977" r="1.5" fill="#fff"/>
<g font-family="Liberation Sans" font-size="7" fill="#5ea8f5" text-anchor="middle"><text x="5.2" y="75">0</text><text x="19.6" y="75">1</text><text x="34.0" y="75">3</text><text x="48.3" y="75">15</text><text x="62.7" y="75">50</text><text x="77.1" y="75">85</text><text x="91.5" y="75">97</text><text x="105.8" y="75">99</text><text x="120.2" y="75">100</text></g>
</svg>
<!-- tab extras -->
<svg class="abs" style="left:1310px;top:97px" width="15" height="15" viewBox="0 0 15 15"><circle cx="7.5" cy="7.5" r="6.5" fill="none" stroke="#bccbdb" stroke-width="1"/><path d="M5.5 5.8C5.5 4.6 6.4 3.9 7.5 3.9S9.5 4.6 9.5 5.7C9.5 6.9 7.8 7.2 7.8 8.6" fill="none" stroke="#bccbdb" stroke-width="1.1"/><circle cx="7.8" cy="10.7" r="0.75" fill="#bccbdb"/></svg>
<svg class="abs" style="left:1295px;top:80px" width="29" height="18" viewBox="0 0 29 18"><defs><linearGradient id="vg" x1="0" y1="0" x2="1" y2="0"><stop offset="0" stop-color="#f0a444"/><stop offset="1" stop-color="#e88d22"/></linearGradient></defs><path d="M3 1H26Q28 1 28 3V12Q28 14 26 14H4.5L0.3 17.2L1 12.3V3Q1 1 3 1Z" fill="url(#vg)"/><text x="14.8" y="12" font-family="Liberation Sans" font-size="11.5" font-weight="bold" font-style="italic" fill="#fff" stroke="#fff" stroke-width="0.5" text-anchor="middle" letter-spacing="-0.3">VIP</text></svg>

</body></html>
